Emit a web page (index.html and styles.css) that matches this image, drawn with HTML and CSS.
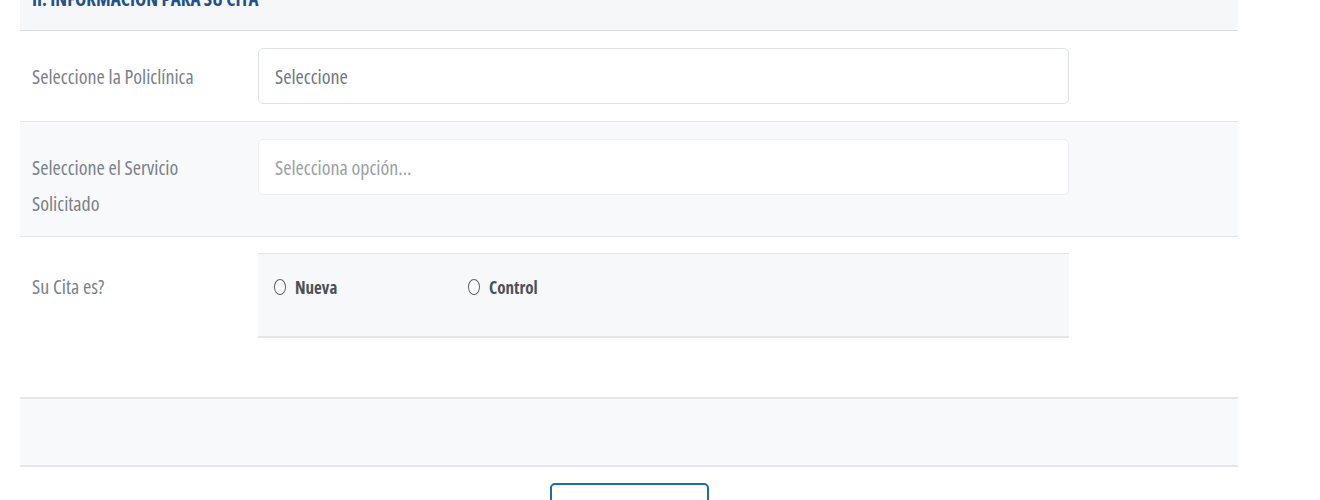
FILE: index.html
```html
<!DOCTYPE html>
<html lang="es">
<head>
    <meta charset="UTF-8">
    <meta name="viewport" content="width=device-width, initial-scale=1.0">
    <title>Información para su cita</title>
    <link rel="stylesheet" href="styles.css">
</head>
<body>
    <div class="form-wrap">
        <div class="section-title">
            <h4>II. Información para su cita</h4>
        </div>

        <div class="form-row">
            <label class="form-label">Seleccione la Policlínica</label>
            <div class="form-control">Seleccione</div>
        </div>

        <div class="form-row alt">
            <label class="form-label">Seleccione el Servicio Solicitado</label>
            <div class="form-control placeholder">Selecciona opción...</div>
        </div>

        <div class="form-row tall">
            <label class="form-label">Su Cita es?</label>
            <div class="radio-box">
                <label class="radio-option"><span class="radio-mark"></span> Nueva</label>
                <label class="radio-option"><span class="radio-mark"></span> Control</label>
            </div>
        </div>

        <div class="form-row alt empty"></div>

        <div class="actions">
            <button class="btn-outline" type="button"></button>
        </div>
    </div>
</body>
</html>
```

FILE: styles.css
```css
body {
    margin: 0;
    padding: 0;
    background-color: #fff;
    font-family: "Open Sans", "DejaVu Sans", sans-serif;
    font-stretch: 75%;
    overflow: hidden;
}

.form-wrap {
    width: 1218px;
    margin-left: 20px;
}

.section-title {
    height: 30px;
    background-color: #f5f7f9;
    border-bottom: 1px solid #d6dce4;
    overflow: hidden;
}

.section-title h4 {
    margin: -13px 0 0 12px;
    font-size: 19px;
    line-height: 24px;
    font-weight: 700;
    text-transform: uppercase;
    color: #24518a;
}

.form-row {
    display: grid;
    grid-template-columns: 238px 811px;
    padding: 17px 0;
    border-bottom: 1px solid #e2e6ea;
}

.form-row.alt {
    background-color: #f8f9fa;
}

.form-row.tall {
    padding: 16px 0 59px;
    border-bottom: 2px solid #e4e7ea;
}

.form-row.empty {
    height: 32px;
    border-bottom: 2px solid #e4e7ea;
}

.form-label {
    padding: 11px 40px 0 12px;
    margin-bottom: -3px;
    font-size: 20px;
    line-height: 36px;
    color: #7a8289;
}

.form-row.tall .form-label {
    padding-top: 16px;
}

.form-control {
    height: 54px;
    padding: 0 16px;
    border: 1px solid #dfe3e7;
    border-radius: 5px;
    background-color: #fff;
    font-size: 20px;
    line-height: 56px;
    color: #6f777f;
}

.form-row.alt .form-control {
    border-color: #eceef1;
}

.form-control.placeholder {
    color: #9a9fa5;
}

.radio-box {
    display: flex;
    height: 82px;
    padding: 0 16px;
    background-color: #f7f8f9;
    border-top: 1px solid #e3e6e9;
    border-bottom: 2px solid #e4e7ea;
}

.radio-option {
    display: flex;
    align-items: center;
    gap: 9px;
    width: 194px;
    height: 66px;
    font-size: 17px;
    font-weight: 700;
    color: #4a5158;
}

.radio-mark {
    width: 10px;
    height: 14px;
    border: 1px solid #5b6167;
    border-radius: 50%;
    background-color: #fff;
}

.actions {
    display: flex;
    justify-content: center;
    padding-top: 16px;
}

.btn-outline {
    width: 159px;
    height: 44px;
    border: 2px solid #1f6ab1;
    border-radius: 5px;
    background-color: #fff;
}
```
